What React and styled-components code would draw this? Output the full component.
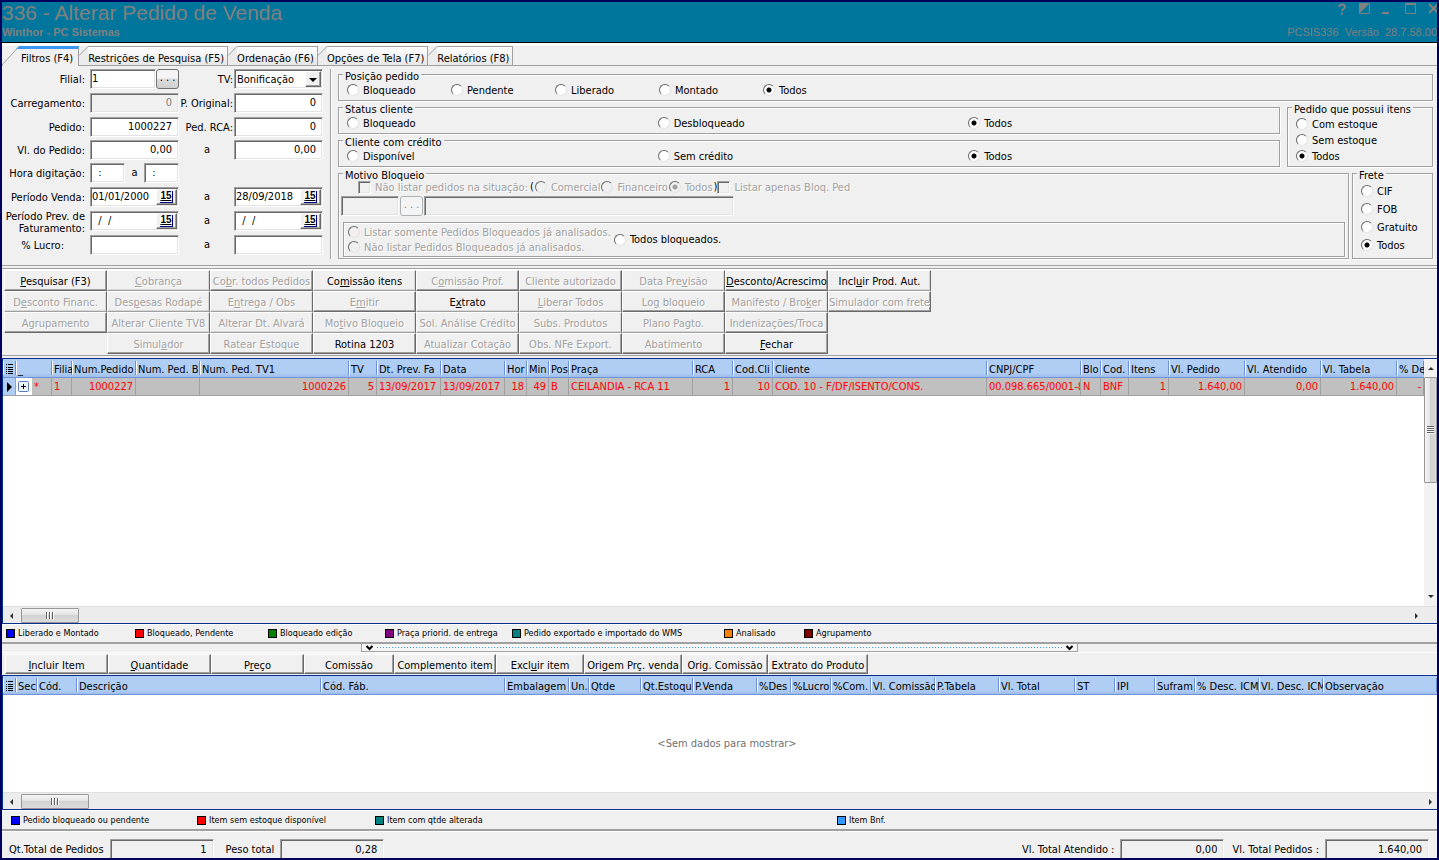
import React from "react";
import styled, { createGlobalStyle, css } from "styled-components";

const GlobalStyle = createGlobalStyle`
  *, *::before, *::after {
    box-sizing: border-box;
  }

  body {
    margin: 0;
    background: #f0f0f0;
  }

  body, button, input, select {
    font-family: "DejaVu Sans Condensed", "DejaVu Sans", sans-serif;
    font-size: 11px;
    line-height: 14px;
    color: #000;
  }
`;

const sunken = css`
  border: 1px solid;
  border-color: #a0a0a0 #fff #fff #a0a0a0;
  box-shadow: inset 1px 1px 0 #696969, inset -1px -1px 0 #e3e3e3;
`;

const raised = css`
  border: 1px solid;
  border-color: #fff #696969 #696969 #fff;
  box-shadow: inset -1px -1px 0 #a0a0a0;
`;

const Window = styled.div`
  min-height: 100vh;
  display: flex;
  flex-direction: column;
  border: 2px solid #00005c;
  background: #f0f0f0;
  white-space: nowrap;
  overflow: hidden;
`;

/* title bar */

const TitleBar = styled.header`
  display: flex;
  justify-content: space-between;
  height: 41px;
  background: #00769c;
  border-bottom: 1px solid #000;
  color: #808080;
  font-family: "Liberation Sans", Arial, sans-serif;
`;

const Title = styled.h1`
  margin: 0;
  font-size: 21px;
  line-height: 22px;
  font-weight: normal;
`;

const Subtitle = styled.p`
  margin: 0;
  font-size: 11px;
  line-height: 16px;
  font-weight: bold;
`;

const TitleSide = styled.div`
  display: flex;
  flex-direction: column;
  align-items: flex-end;
  justify-content: space-between;
  padding-bottom: 3px;
`;

const WindowButtons = styled.div`
  display: flex;
  gap: 11px;
  margin-right: -3px;
`;

const WindowButton = styled.button`
  width: 12px;
  height: 15px;
  padding: 0;
  border: 0;
  background: none;
  color: inherit;

  svg {
    display: block;
  }
`;

const Version = styled.span`
  font-size: 11px;
  line-height: 14px;
  white-space: pre;
`;

/* tabs */

const TabStrip = styled.nav`
  display: flex;
  height: 23px;
  padding-top: 3px;
  border-top: 3px solid #fff;
  border-bottom: 1px solid #a0a0a0;
`;

const TabButton = styled.button`
  display: flex;
  height: ${(p) => (p.$active ? "20px" : "19px")};
  margin-top: -3px;
  padding: 0;
  border: 0;
  background: none;
`;

const TabFace = styled.span`
  height: 100%;
  padding: ${(p) => (p.$active ? "3px 5px 0 1px" : "5px 3px 0 0")};
  border-top: ${(p) => (p.$active ? "3px solid #3c96f5" : "1px solid #a0a0a0")};
  border-right: 1px solid #a0a0a0;
  background: ${(p) =>
    p.$active ? "#f0f0f0" : "linear-gradient(#fff, #e6e6e6)"};
`;

/* filters */

const Filters = styled.form`
  display: flex;
  padding: 3px 4px 6px 0;
  border-bottom: 1px solid #a0a0a0;
`;

const FieldGrid = styled.div`
  flex: none;
  display: grid;
  grid-template-columns: 88px 90px 54px 90px;
  grid-template-rows: 24px 24px 23px 23px 24px 24px 24px 24px;
  margin-right: 6px;
`;

const FieldLabel = styled.label`
  height: 20px;
  padding-right: ${(p) => (p.$inset ? "26px" : "5px")};
  line-height: 22px;
  text-align: right;
`;

const SideLabel = styled(FieldLabel)`
  padding-right: 1px;
`;

const TwoLineLabel = styled(FieldLabel)`
  height: 24px;
  line-height: 12px;
`;

const To = styled.span`
  line-height: 20px;
  text-align: center;
`;

const FieldCell = styled.div`
  display: flex;
  justify-content: space-between;
  align-items: flex-start;
  width: 89px;
`;

const TextInput = styled.input`
  ${sunken}
  flex: ${(p) => (p.$width ? "none" : "1 1 0")};
  width: ${(p) => p.$width || "100%"};
  min-width: 0;
  height: 20px;
  padding: 0 ${(p) => (p.$right ? "6px" : "1px")} 2px 1px;
  background: #fff;
  text-align: ${(p) => (p.$right ? "right" : "left")};
  outline: 0;
  white-space: pre;

  &:disabled {
    background: #f0f0f0;
    color: #808080;
  }
`;

const DotsButton = styled.button`
  flex: none;
  width: 23px;
  height: 20px;
  padding: 0 0 3px;
  border: 1px solid #707070;
  border-radius: 3px;
  background: linear-gradient(#f4f4f4 45%, #dcdcdc 50%, #cfcfcf);

  &:disabled {
    border-color: #adb2b5;
    background: #f4f4f4;
    color: #838383;
  }
`;

const SelectBox = styled.div`
  position: relative;
  width: 89px;
  height: 20px;

  select {
    ${sunken}
    width: 100%;
    height: 20px;
    padding: 1px 18px 0 2px;
    border-radius: 0;
    appearance: none;
    background: #fff;
  }

  span {
    ${raised}
    position: absolute;
    top: 2px;
    right: 2px;
    width: 16px;
    height: 16px;
    padding: 6px 3px;
    background: #f0f0f0;
    pointer-events: none;
  }

  svg {
    display: block;
  }
`;

const DateBox = styled.div`
  ${sunken}
  display: flex;
  width: 89px;
  height: 20px;
  padding: 1px;
  background: #fff;

  input {
    flex: 1;
    min-width: 0;
    padding: 0;
    border: 0;
    background: none;
    white-space: pre;
  }

  button {
    ${raised}
    flex: none;
    width: 21px;
    height: 16px;
    padding: 1px 3px;
    background: #f0f0f0;
  }

  span {
    display: block;
    height: 12px;
    border: solid #000080;
    border-width: 0 1px 1px 0;
    background: #fff;
    font-family: "Liberation Sans", Arial, sans-serif;
    font-size: 10px;
    font-weight: bold;
    line-height: 10px;
    text-decoration: underline;
  }
`;

const Divider = styled.div`
  flex: none;
  width: 2px;
  margin-right: 6px;
  border-left: 1px solid #a0a0a0;
  border-right: 1px solid #fff;
`;

const Options = styled.div`
  flex: 1;
  min-width: 0;
  display: flex;
  flex-direction: column;
  gap: 1px;
`;

const OptionsRow = styled.div`
  display: grid;
  grid-template-columns: minmax(0, 1fr) ${(p) => p.$side};
  column-gap: ${(p) => p.$gap};
`;

const Stack = styled.div`
  display: flex;
  flex-direction: column;
  gap: 1px;
`;

const etched = css`
  margin: 0;
  border: 1px solid #a0a0a0;
  box-shadow: 1px 1px 0 #fff, inset 1px 1px 0 #fff;
`;

const Group = styled.fieldset`
  ${etched}
  min-width: 0;
  height: ${(p) => p.$height || "32px"};
  padding: 0;

  > legend {
    height: 11px;
    margin-left: 4px;
    padding: 0 2px;
    background: #f0f0f0;
    line-height: 15px;
  }
`;

const RadioRow = styled.div`
  display: grid;
  grid-template-columns: ${(p) => p.$columns};
  height: 20px;
  padding-left: 8px;
`;

const RadioColumn = styled.div`
  display: grid;
  grid-auto-rows: ${(p) => p.$pitch};
  padding: 3px 0 0 8px;
`;

const Choice = styled.label`
  display: flex;
  align-items: center;
  gap: 4px;
  color: ${(p) => (p.$disabled ? "#a0a0a0" : "#000")};
  text-shadow: ${(p) => (p.$disabled ? "1px 1px 0 #fff" : "none")};

  > span {
    padding-top: 1px;
  }
`;

const Radio = styled.input.attrs({ type: "radio" })`
  flex: none;
  width: 12px;
  height: 12px;
  margin: 0;
  border: 1px solid;
  border-color: #696969 #e3e3e3 #e3e3e3 #696969;
  border-radius: 50%;
  appearance: none;
  background: #fff;

  &:checked {
    background: radial-gradient(circle, #000 2px, #fff 3px);
  }

  &:disabled {
    background: #f0f0f0;
  }

  &:disabled:checked {
    background: radial-gradient(circle, #a0a0a0 2px, #f0f0f0 3px);
  }
`;

const CheckBox = styled.input.attrs({ type: "checkbox" })`
  ${sunken}
  flex: none;
  width: 13px;
  height: 13px;
  margin: 0;
  appearance: none;
  background: #f0f0f0;
`;

const BlockRow = styled.div`
  display: flex;
  align-items: center;
  height: 16px;
  padding-left: 19px;
`;

const SituationGroup = styled.div`
  display: flex;
  align-items: center;
  gap: 1px;
  margin-left: 2px;
`;

const ReasonRow = styled.div`
  display: flex;
  gap: 1px;
  margin-top: 1px;
  padding-left: 2px;
`;

const AnalysedBox = styled.div`
  ${etched}
  display: flex;
  align-items: center;
  gap: 3px;
  height: 35px;
  margin: 6px 3px 0 4px;
  padding-left: 4px;
`;

/* command buttons */

const Commands = styled.div`
  display: grid;
  grid-template-columns: repeat(9, 103px);
  grid-auto-rows: 21px;
  margin-top: 2px;
  padding: 1px 0 1px 2px;
  border-top: 1px solid #a0a0a0;
  border-bottom: 1px solid #a0a0a0;
  box-shadow: inset 0 1px 0 #fff;
`;

const CommandButton = styled.button`
  min-width: 0;
  height: 100%;
  padding: 3px 0 0;
  border: solid;
  border-width: 1px;
  border-color: #fff #696969 ${(p) => (p.$edge ? "#696969" : "#a0a0a0")} #fff;
  box-shadow: inset -1px -1px 0 ${(p) => (p.$edge ? "#a0a0a0" : "#d8d8d8")};
  background: #f0f0f0;
  overflow: hidden;

  &:disabled {
    color: #a0a0a0;
    text-shadow: 1px 1px 0 #fff;
  }
`;

const ItemCommands = styled.div`
  display: grid;
  grid-template-columns: 103px 103px 93px 90px 102px 88px 98px 86px 100px;
  height: 23px;
  padding: 1px 0 1px 3px;
  border-top: 1px solid #fff;
`;

/* data grids */

const GridPanel = styled.section`
  display: flex;
  flex-direction: column;
  flex: ${(p) => (p.$grow ? "1 0 200px" : "none")};
  height: ${(p) => (p.$grow ? "auto" : "135px")};
  margin-top: ${(p) => (p.$grow ? "2px" : "0")};
  border: solid #00308c;
  border-width: 1px 0 1px 1px;
  background: #fff;
`;

const GridBody = styled.div`
  flex: 1;
  display: flex;
  min-height: 0;
`;

const GridView = styled.div`
  flex: 1;
  min-width: 0;
  display: flex;
  flex-direction: column;
  overflow: hidden;
`;

const Table = styled.table`
  width: 100%;
  table-layout: fixed;
  border-collapse: separate;
  border-spacing: 0;
`;

const Th = styled.th`
  height: 19px;
  padding: 3px 0 0 2px;
  border-bottom: 1px solid #6f93d6;
  background: linear-gradient(#6a8fd4, #6a8fd4) right 2px / 1px 14px no-repeat,
    linear-gradient(#fff, #fff) left 2px / 1px 14px no-repeat,
    linear-gradient(#b0cdf3 14px, #9dbdec);
  font-weight: normal;
  text-align: left;
  overflow: hidden;
`;

const Td = styled.td`
  height: 18px;
  padding: 1px 2px 0;
  border: solid #a0a0a0;
  border-width: 0 1px 1px 0;
  background: #c0c0c0;
  color: #f00;
  text-align: ${(p) => (p.$right ? "right" : "left")};
  overflow: hidden;
`;

const MarkerTd = styled(Td)`
  background: #b0cdf3;

  svg {
    display: block;
  }
`;

const ExpandTd = styled(Td)`
  padding: 0;

  div {
    display: flex;
    align-items: center;
    gap: 2px;
  }

  button {
    width: 16px;
    height: 17px;
    padding: 3px 2px;
    border: 0;
    background: #fff;
  }

  svg {
    display: block;
  }
`;

const EmptyMessage = styled.p`
  flex: 1;
  display: flex;
  align-items: center;
  justify-content: center;
  margin: 0;
  padding-left: 14px;
  color: #707070;
`;

const scrollArrow = css`
  display: flex;
  align-items: center;
  justify-content: center;
  flex: none;
  padding: 0;
  border: 0;
  background: none;
`;

const HScroll = styled.div`
  flex: none;
  display: flex;
  height: 17px;
  padding: 1px ${(p) => (p.$corner ? "14px" : "0")} 0 0;
  border-top: 1px solid #e0e0e0;
  background: #ececec;

  > button {
    ${scrollArrow}
    width: 18px;
  }

  > button:last-child {
    justify-content: flex-end;
    padding-right: 3px;
  }
`;

const HTrack = styled.div`
  flex: 1;
`;

const HThumb = styled.div`
  display: flex;
  align-items: center;
  justify-content: center;
  gap: 1px;
  width: ${(p) => p.$width};
  height: 15px;
  border: 1px solid #979797;
  border-radius: 1px;
  background: linear-gradient(#f5f5f5, #e3e3e3 45%, #d2d2d2 50%, #dcdcdc);

  i {
    width: 2px;
    height: 7px;
    border-left: 1px solid #606060;
    border-right: 1px solid #fff;
  }
`;

const VScroll = styled.div`
  flex: none;
  display: flex;
  flex-direction: column;
  width: 13px;
  background: #f2f2f2;

  > button {
    ${scrollArrow}
    height: 18px;
  }
`;

const VTrack = styled.div`
  flex: 1;
`;

const VThumb = styled.div`
  display: flex;
  flex-direction: column;
  align-items: center;
  justify-content: center;
  height: 106px;
  border: 1px solid #979797;
  border-radius: 1px;
  background: linear-gradient(90deg, #f5f5f5, #e3e3e3 45%, #d0d0d0 50%, #dcdcdc);

  i {
    width: 7px;
    height: 2px;
    border-top: 1px solid #606060;
    border-bottom: 1px solid #fff;
  }
`;

/* legends, splitter and totals */

const LegendBar = styled.ul`
  display: grid;
  grid-template-columns: ${(p) => p.$columns};
  align-items: center;
  height: ${(p) => (p.$tall ? "21px" : "20px")};
  margin: 0;
  padding: 0 0 0 ${(p) => p.$start};
  border-top: 1px solid #fff;
  border-bottom: 2px solid #a0a0a0;
  font-size: 9px;
  line-height: 13px;
  list-style: none;
`;

const LegendItem = styled.li`
  display: flex;
  align-items: center;
  gap: 3px;

  &::before {
    content: "";
    flex: none;
    width: 9px;
    height: 9px;
    border: 1px solid #000;
    background: ${(p) => p.$color};
  }
`;

const Splitter = styled.div`
  height: 8px;
`;

const SplitterGrip = styled.div`
  display: flex;
  align-items: center;
  gap: 3px;
  width: 50%;
  height: 8px;
  margin: 0 auto;
  padding: 0 3px;
  border: 1px solid #a0a0a0;
  border-top: 0;
  background: #f6f6f6;

  svg {
    flex: none;
  }
`;

const Dots = styled.div`
  flex: 1;
  height: 1px;
  background: repeating-linear-gradient(90deg, #3c96f5 0 1px, transparent 1px 3px);
`;

const Totals = styled.footer`
  display: flex;
  align-items: flex-end;
  height: 27px;
  padding: 0 8px 0 7px;
  border-top: 1px solid #fff;
`;

const Total = styled.div`
  display: flex;
  align-items: center;
  gap: 6px;
  margin-left: ${(p) => (p.$push ? "auto" : "0")};
  margin-right: ${(p) => p.$after || "0"};

  label {
    padding-top: 2px;
  }

  input {
    height: 19px;
    padding-bottom: 0;
    border-bottom: 0;
    background: #f0f0f0;
    box-shadow: inset 1px 1px 0 #696969, inset -1px 0 0 #e3e3e3;
  }
`;

// "&" stands before the shortcut letter
const Caption = ({ text }) => {
  const [before, after] = text.split("&");
  if (after === undefined) return text;
  return (
    <>
      {before}
      <u>{after[0]}</u>
      {after.slice(1)}
    </>
  );
};

const TABS = [
  "Filtros (F4)",
  "Restrições de Pesquisa (F5)",
  "Ordenação (F6)",
  "Opções de Tela (F7)",
  "Relatórios (F8)",
];

const COMMANDS = [
  { text: "&Pesquisar (F3)", on: true, edge: true },
  { text: "&Cobrança" },
  { text: "Co&br. todos Pedidos", edge: true },
  { text: "Co&missão itens", on: true },
  { text: "C&omissão Prof.", edge: true },
  { text: "Cliente autorizado", edge: true },
  { text: "Data Pre&visão" },
  { text: "&Desconto/Acrescimo", on: true, edge: true },
  { text: "Incl&uir Prod. Aut.", on: true },
  { text: "D&esconto Financ." },
  { text: "Des&pesas Rodapé" },
  { text: "E&ntrega / Obs" },
  { text: "E&mitir", edge: true },
  { text: "E&xtrato", on: true },
  { text: "&Liberar Todos" },
  { text: "Lo&g bloqueio", edge: true },
  { text: "Manifesto / Bro&ker" },
  { text: "Simulador com frete", edge: true },
  { text: "Agrupamento", edge: true },
  { text: "Alterar Cliente TV8" },
  { text: "Alterar Dt. Alvará" },
  { text: "Mo&tivo Bloqueio" },
  { text: "Sol. Análise Crédito" },
  { text: "Subs. Produtos" },
  { text: "Plano Pagto." },
  { text: "Indenizações/Troca", edge: true },
  null,
  null,
  { text: "Simul&ador", edge: true },
  { text: "Ratear Estoque", edge: true },
  { text: "Rotina 1203", on: true, edge: true },
  { text: "Atualizar Cotação", edge: true },
  { text: "Obs. NFe Export.", edge: true },
  { text: "Abatimento", edge: true },
  { text: "&Fechar", on: true, edge: true },
];

const ITEM_COMMANDS = [
  "&Incluir Item",
  "&Quantidade",
  "P&reço",
  "Comissão",
  "Complemento item",
  "Excl&uir item",
  "Origem Prç. venda",
  "Orig. Comissão",
  "Extrato do Produto",
];

const ORDER_COLUMNS = [
  { title: "Filia", width: 20, value: "1" },
  { title: "Num.Pedido", width: 64, value: "1000227", right: true },
  { title: "Num. Ped. B", width: 64, value: "" },
  { title: "Num. Ped. TV1", width: 149, value: "1000226", right: true },
  { title: "TV", width: 28, value: "5", right: true },
  { title: "Dt. Prev. Fa", width: 64, value: "13/09/2017" },
  { title: "Data", width: 64, value: "13/09/2017" },
  { title: "Hor", width: 22, value: "18", right: true },
  { title: "Min", width: 22, value: "49", right: true },
  { title: "Pos", width: 20, value: "B" },
  { title: "Praça", width: 124, value: "CEILANDIA - RCA 11" },
  { title: "RCA", width: 40, value: "1", right: true },
  { title: "Cod.Cli", width: 40, value: "10", right: true },
  { title: "Cliente", width: 214, value: "COD. 10 - F/DF/ISENTO/CONS." },
  { title: "CNPJ/CPF", width: 94, value: "00.098.665/0001-8" },
  { title: "Blo", width: 20, value: "N" },
  { title: "Cod.", width: 28, value: "BNF" },
  { title: "Itens", width: 40, value: "1", right: true },
  { title: "Vl. Pedido", width: 76, value: "1.640,00", right: true },
  { title: "Vl. Atendido", width: 76, value: "0,00", right: true },
  { title: "Vl. Tabela", width: 76, value: "1.640,00", right: true },
  { title: "% De", value: "-", right: true },
];

const ITEM_COLUMNS = [
  { title: "Sec", width: 21 },
  { title: "Cód.", width: 40 },
  { title: "Descrição", width: 244 },
  { title: "Cód. Fáb.", width: 184 },
  { title: "Embalagem", width: 64 },
  { title: "Un.", width: 20 },
  { title: "Qtde", width: 52 },
  { title: "Qt.Estoqu", width: 52 },
  { title: "P.Venda", width: 64 },
  { title: "%Des", width: 34 },
  { title: "%Lucro", width: 40 },
  { title: "%Com.", width: 40 },
  { title: "Vl. Comissão", width: 64 },
  { title: "P.Tabela", width: 64 },
  { title: "Vl. Total", width: 76 },
  { title: "ST", width: 40 },
  { title: "IPI", width: 40 },
  { title: "Sufram", width: 40 },
  { title: "% Desc. ICM", width: 64 },
  { title: "Vl. Desc. ICM", width: 64 },
  { title: "Observação" },
];

const ORDER_LEGEND = [
  ["#0000ff", "Liberado e Montado"],
  ["#ff0000", "Bloqueado, Pendente"],
  ["#008000", "Bloqueado edição"],
  ["#800080", "Praça priorid. de entrega"],
  ["#008080", "Pedido exportado e importado do WMS"],
  ["#ff8000", "Analisado"],
  ["#800000", "Agrupamento"],
];

const ITEM_LEGEND = [
  ["#0000ff", "Pedido bloqueado ou pendente"],
  ["#ff0000", "Item sem estoque disponível"],
  ["#008080", "Item com qtde alterada"],
  ["#3399ff", "Item Bnf."],
];

const Tab = ({ text, active }) => {
  const width = active ? 18 : 9;
  return (
    <TabButton type="button" $active={active}>
      <svg width={width} height={active ? 20 : 19}>
        {active ? (
          <>
            <path d="M0 20 L18 1 V20 Z" fill="#f0f0f0" />
            <path d="M14 3 L17 0 H18 V3 Z" fill="#3c96f5" />
            <path d="M0 19 L17 0.5" stroke="#a0a0a0" />
          </>
        ) : (
          <>
            <path d="M0 9 L9 0 V19 H0 Z" fill="#ececec" />
            <path d="M0 9.5 L9 0.5" stroke="#a0a0a0" />
          </>
        )}
      </svg>
      <TabFace $active={active}>{text}</TabFace>
    </TabButton>
  );
};

const RadioChoice = ({ name, text, checked, disabled }) => (
  <Choice $disabled={disabled}>
    <Radio name={name} defaultChecked={checked} disabled={disabled} />
    <span>{text}</span>
  </Choice>
);

const RadioGroup = ({ title, name, options, columns, pitch, height }) => {
  const choices = options.map((text) => (
    <RadioChoice key={text} name={name} text={text} checked={text === "Todos"} />
  ));
  return (
    <Group $height={height}>
      <legend>{title}</legend>
      {columns ? (
        <RadioRow $columns={columns}>{choices}</RadioRow>
      ) : (
        <RadioColumn $pitch={pitch}>{choices}</RadioColumn>
      )}
    </Group>
  );
};

const DateField = ({ id, label, value }) => (
  <DateBox>
    <input id={id} aria-label={label} defaultValue={value} />
    <button type="button" aria-label="Calendário">
      <span>15</span>
    </button>
  </DateBox>
);

const Arrow = ({ d }) => (
  <svg width="8" height="8" viewBox="0 0 8 8">
    <path d={d} fill="#303030" />
  </svg>
);

const HorizontalScroll = ({ thumb, corner }) => (
  <HScroll $corner={corner}>
    <button type="button" aria-label="Rolar para a esquerda">
      <Arrow d="M5 1 V7 L2 4 Z" />
    </button>
    <HTrack>
      <HThumb $width={thumb}>
        <i />
        <i />
        <i />
      </HThumb>
    </HTrack>
    <button type="button" aria-label="Rolar para a direita">
      <Arrow d="M3 1 V7 L6 4 Z" />
    </button>
  </HScroll>
);

const ColumnsIcon = () => (
  <svg width="8" height="11" display="block">
    <path
      d="M1 0.5 H2 M3 0.5 H8 M1 3.5 H2 M3 3.5 H8 M1 5.5 H2 M3 5.5 H8 M1 7.5 H2 M3 7.5 H8 M1 9.5 H2 M3 9.5 H8"
      stroke="#000"
    />
  </svg>
);

const Chevron = () => (
  <svg width="9" height="6">
    <path d="M1.5 1 L4.5 4 L7.5 1" stroke="#000" strokeWidth="2" fill="none" />
  </svg>
);

const OrdersTable = () => (
  <Table>
    <colgroup>
      <col width="13" />
      <col width="36" />
      {ORDER_COLUMNS.map((c) => (
        <col key={c.title} width={c.width} />
      ))}
    </colgroup>
    <thead>
      <tr>
        <Th aria-label="Colunas">
          <ColumnsIcon />
        </Th>
        <Th>_</Th>
        {ORDER_COLUMNS.map((c) => (
          <Th key={c.title}>{c.title}</Th>
        ))}
      </tr>
    </thead>
    <tbody>
      <tr>
        <MarkerTd>
          <svg width="8" height="10">
            <path d="M2 0 L7 5 L2 10 Z" />
          </svg>
        </MarkerTd>
        <ExpandTd>
          <div>
            <button type="button" aria-label="Expandir">
              <svg width="11" height="11">
                <rect x="0.5" y="0.5" width="10" height="10" rx="1" fill="#eef3fb" stroke="#5a7fb8" />
                <path d="M3 5.5 H8 M5.5 3 V8" stroke="#000" />
              </svg>
            </button>
            *
          </div>
        </ExpandTd>
        {ORDER_COLUMNS.map((c) => (
          <Td key={c.title} $right={c.right}>
            {c.value}
          </Td>
        ))}
      </tr>
    </tbody>
  </Table>
);

const ItemsTable = () => (
  <Table>
    <colgroup>
      <col width="13" />
      {ITEM_COLUMNS.map((c) => (
        <col key={c.title} width={c.width} />
      ))}
    </colgroup>
    <thead>
      <tr>
        <Th aria-label="Colunas">
          <ColumnsIcon />
        </Th>
        {ITEM_COLUMNS.map((c) => (
          <Th key={c.title}>{c.title}</Th>
        ))}
      </tr>
    </thead>
  </Table>
);

const Legend = ({ items, ...props }) => (
  <LegendBar {...props}>
    {items.map(([color, text]) => (
      <LegendItem key={text} $color={color}>
        {text}
      </LegendItem>
    ))}
  </LegendBar>
);

const TotalField = ({ id, label, value, push, after }) => (
  <Total $push={push} $after={after}>
    <label htmlFor={id}>{label}</label>
    <TextInput id={id} $width="104px" $right readOnly defaultValue={value} />
  </Total>
);

const Header = () => (
  <TitleBar>
    <div>
      <Title>336 - Alterar Pedido de Venda</Title>
      <Subtitle>Winthor - PC Sistemas</Subtitle>
    </div>
    <TitleSide>
      <WindowButtons>
        <WindowButton aria-label="Ajuda">
          <svg width="12" height="15">
            <path
              d="M3 5 C3 2.5 5 2.5 6 2.5 C8 2.5 9 3.5 9 5 C9 7 6 7 6 9 M6 10.5 V12.5"
              stroke="currentColor"
              strokeWidth="2"
              fill="none"
            />
          </svg>
        </WindowButton>
        <WindowButton aria-label="Tema">
          <svg width="12" height="15">
            <path d="M0 1 H11 L0 12 Z" fill="currentColor" />
            <path d="M0.5 1.5 H10.5 V11.5 H0.5 Z" stroke="currentColor" fill="none" />
          </svg>
        </WindowButton>
        <WindowButton aria-label="Minimizar">
          <svg width="12" height="15">
            <path d="M0 11 H7" stroke="currentColor" strokeWidth="2" />
          </svg>
        </WindowButton>
        <WindowButton aria-label="Maximizar">
          <svg width="12" height="15">
            <path d="M0.5 1.5 H10.5 V11.5 H0.5 Z M0 2.5 H11" stroke="currentColor" fill="none" />
          </svg>
        </WindowButton>
        <WindowButton aria-label="Fechar janela">
          <svg width="12" height="15">
            <path d="M1 2 L10 11 M10 2 L1 11" stroke="currentColor" strokeWidth="2" />
          </svg>
        </WindowButton>
      </WindowButtons>
      <Version>{"PCSIS336  Versão  28.7.58.00"}</Version>
    </TitleSide>
  </TitleBar>
);

const FilterFields = () => (
  <FieldGrid>
    <FieldLabel htmlFor="filial">Filial:</FieldLabel>
    <FieldCell>
      <TextInput id="filial" $width="66px" defaultValue="1" />
      <DotsButton type="button">. . .</DotsButton>
    </FieldCell>
    <SideLabel htmlFor="tv">TV:</SideLabel>
    <SelectBox>
      <select id="tv" defaultValue="Bonificação">
        <option>Bonificação</option>
      </select>
      <span>
        <svg width="8" height="4">
          <path d="M0 0 H8 L4 4 Z" />
        </svg>
      </span>
    </SelectBox>

    <FieldLabel htmlFor="carregamento">Carregamento:</FieldLabel>
    <FieldCell>
      <TextInput id="carregamento" $right disabled defaultValue="0" />
    </FieldCell>
    <SideLabel htmlFor="original">P. Original:</SideLabel>
    <FieldCell>
      <TextInput id="original" $right defaultValue="0" />
    </FieldCell>

    <FieldLabel htmlFor="pedido">Pedido:</FieldLabel>
    <FieldCell>
      <TextInput id="pedido" $right defaultValue="1000227" />
    </FieldCell>
    <SideLabel htmlFor="rca">Ped. RCA:</SideLabel>
    <FieldCell>
      <TextInput id="rca" $right defaultValue="0" />
    </FieldCell>

    <FieldLabel htmlFor="valor">Vl. do Pedido:</FieldLabel>
    <FieldCell>
      <TextInput id="valor" $right defaultValue="0,00" />
    </FieldCell>
    <To>a</To>
    <FieldCell>
      <TextInput aria-label="Valor final" $right defaultValue="0,00" />
    </FieldCell>

    <FieldLabel htmlFor="hora">Hora digitação:</FieldLabel>
    <FieldCell>
      <TextInput id="hora" $width="35px" defaultValue="  :" />
      <To>a</To>
      <TextInput aria-label="Hora final" $width="35px" defaultValue="  :" />
    </FieldCell>
    <span />
    <span />

    <FieldLabel htmlFor="venda">Período Venda:</FieldLabel>
    <DateField id="venda" value="01/01/2000" />
    <To>a</To>
    <DateField label="Venda até" value="28/09/2018" />

    <TwoLineLabel htmlFor="faturamento">
      Período Prev. de
      <br />
      Faturamento:
    </TwoLineLabel>
    <DateField id="faturamento" value="  /  /" />
    <To>a</To>
    <DateField label="Faturamento até" value="  /  /" />

    <FieldLabel htmlFor="lucro" $inset>
      % Lucro:
    </FieldLabel>
    <FieldCell>
      <TextInput id="lucro" />
    </FieldCell>
    <To>a</To>
    <FieldCell>
      <TextInput aria-label="Lucro final" />
    </FieldCell>
  </FieldGrid>
);

const BlockReason = () => (
  <Group $height="91px">
    <legend>Motivo Bloqueio</legend>
    <BlockRow>
      <Choice $disabled>
        <CheckBox disabled />
        <span>Não listar pedidos na situação:</span>
      </Choice>
      <SituationGroup>
        <span>(</span>
        <RadioChoice name="situacao" text="Comercial" disabled />
        <RadioChoice name="situacao" text="Financeiro" disabled />
        <RadioChoice name="situacao" text="Todos" checked disabled />
        <span>)</span>
      </SituationGroup>
      <Choice $disabled>
        <CheckBox disabled />
        <span>Listar apenas Bloq. Ped</span>
      </Choice>
    </BlockRow>
    <ReasonRow>
      <TextInput aria-label="Código do motivo" $width="58px" disabled />
      <DotsButton type="button" disabled>
        . . .
      </DotsButton>
      <TextInput aria-label="Descrição do motivo" $width="310px" disabled />
    </ReasonRow>
    <AnalysedBox>
      <div>
        <RadioChoice name="analise" text="Listar somente Pedidos Bloqueados já analisados." disabled />
        <RadioChoice name="analise" text="Não listar Pedidos Bloqueados já analisados." disabled />
      </div>
      <RadioChoice name="analise" text="Todos bloqueados." />
    </AnalysedBox>
  </Group>
);

const App = () => (
  <>
    <GlobalStyle />
    <Window>
      <Header />
      <TabStrip>
        {TABS.map((text, index) => (
          <Tab key={text} text={text} active={index === 0} />
        ))}
      </TabStrip>

      <Filters>
        <FilterFields />
        <Divider />
        <Options>
          <RadioGroup
            title="Posição pedido"
            name="posicao"
            options={["Bloqueado", "Pendente", "Liberado", "Montado", "Todos"]}
            columns="repeat(5, 104px)"
          />
          <OptionsRow $side="146px" $gap="7px">
            <Stack>
              <RadioGroup
                title="Status cliente"
                name="status"
                options={["Bloqueado", "Desbloqueado", "Todos"]}
                columns="repeat(3, 1fr)"
              />
              <RadioGroup
                title="Cliente com crédito"
                name="credito"
                options={["Disponível", "Sem crédito", "Todos"]}
                columns="repeat(3, 1fr)"
              />
            </Stack>
            <RadioGroup
              title="Pedido que possui itens"
              name="itens"
              options={["Com estoque", "Sem estoque", "Todos"]}
              pitch="16px"
              height="65px"
            />
          </OptionsRow>
          <OptionsRow $side="81px" $gap="3px">
            <BlockReason />
            <RadioGroup
              title="Frete"
              name="frete"
              options={["CIF", "FOB", "Gratuito", "Todos"]}
              pitch="18px"
              height="91px"
            />
          </OptionsRow>
        </Options>
      </Filters>

      <Commands>
        {COMMANDS.map((c, index) =>
          c ? (
            <CommandButton key={c.text} type="button" disabled={!c.on} $edge={c.edge}>
              <Caption text={c.text} />
            </CommandButton>
          ) : (
            <span key={index} />
          )
        )}
      </Commands>

      <GridPanel $grow>
        <GridBody>
          <GridView>
            <OrdersTable />
          </GridView>
          <VScroll>
            <button type="button" aria-label="Rolar para cima">
              <Arrow d="M1 6 H7 L4 3 Z" />
            </button>
            <VTrack>
              <VThumb>
                <i />
                <i />
                <i />
                <i />
              </VThumb>
            </VTrack>
            <button type="button" aria-label="Rolar para baixo">
              <Arrow d="M1 2 H7 L4 5 Z" />
            </button>
          </VScroll>
        </GridBody>
        <HorizontalScroll thumb="58px" corner />
      </GridPanel>
      <Legend
        items={ORDER_LEGEND}
        $start="4px"
        $columns="129px 133px 117px 127px 212px 80px auto"
      />

      <Splitter>
        <SplitterGrip>
          <Chevron />
          <Dots />
          <Chevron />
        </SplitterGrip>
      </Splitter>

      <ItemCommands>
        {ITEM_COMMANDS.map((text) => (
          <CommandButton key={text} type="button" $edge>
            <Caption text={text} />
          </CommandButton>
        ))}
      </ItemCommands>
      <GridPanel>
        <GridView>
          <ItemsTable />
          <EmptyMessage>{"<Sem dados para mostrar>"}</EmptyMessage>
        </GridView>
        <HorizontalScroll thumb="68px" />
      </GridPanel>
      <Legend items={ITEM_LEGEND} $tall $start="9px" $columns="186px 178px 462px auto" />

      <Totals>
        <TotalField id="qtTotal" label="Qt.Total de Pedidos" value="1" after="12px" />
        <TotalField id="peso" label="Peso total" value="0,28" />
        <TotalField id="atendido" label="Vl. Total Atendido :" value="0,00" push after="8px" />
        <TotalField id="pedidos" label="Vl. Total Pedidos :" value="1.640,00" />
      </Totals>
    </Window>
  </>
);

export default App;
